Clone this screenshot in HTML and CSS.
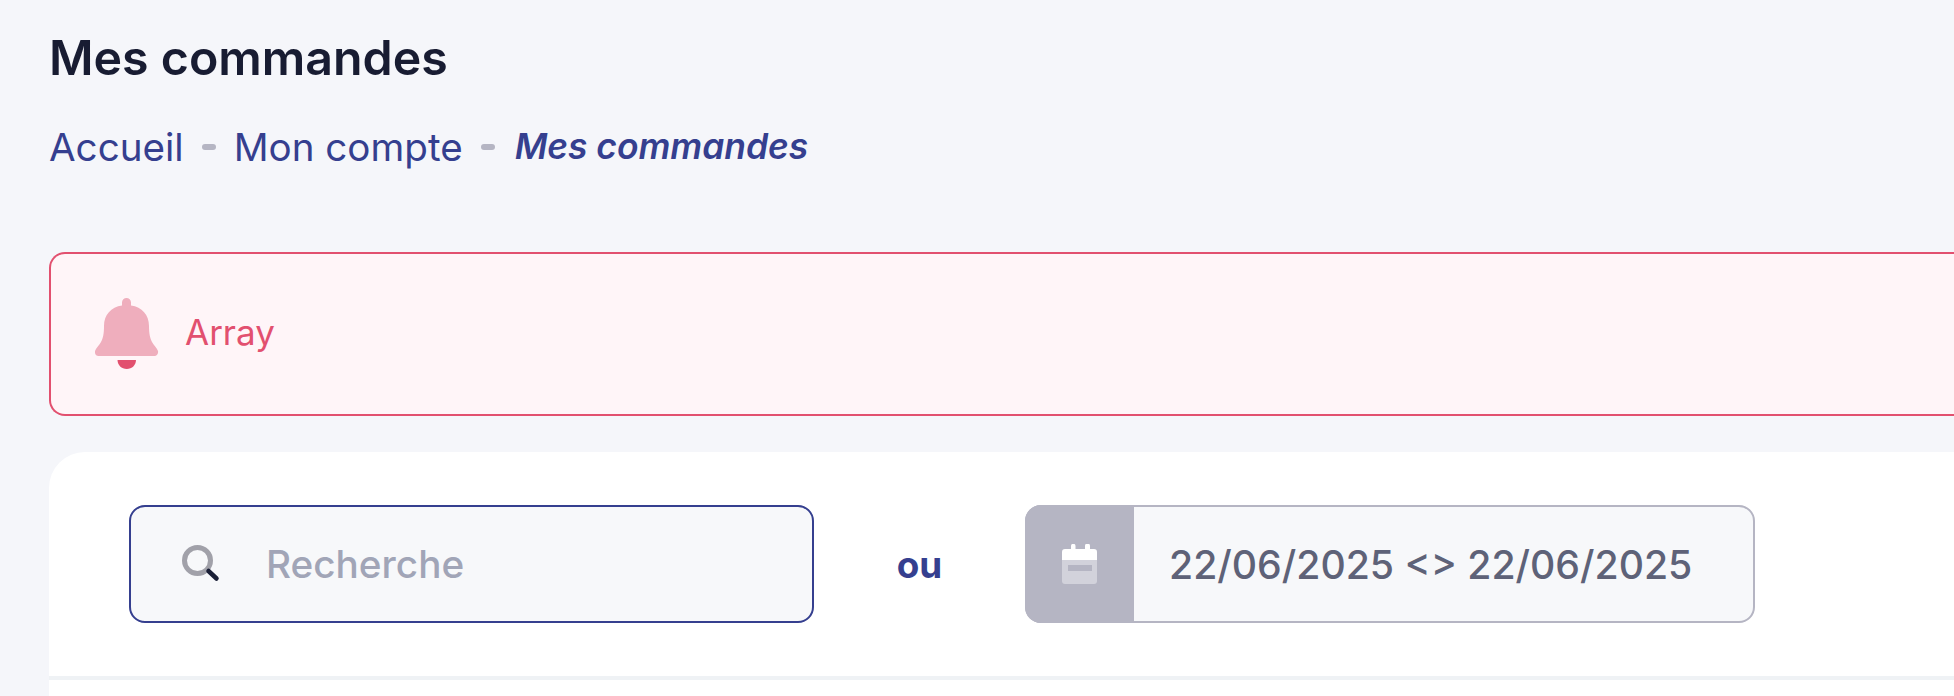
FILE: index.html
```html
<!DOCTYPE html>
<html lang="fr">
<head>
  <meta charset="UTF-8">
  <meta name="viewport" content="width=device-width, initial-scale=1.0">
  <title>Mes commandes</title>
  <link rel="stylesheet" href="styles.css">
</head>
<body>
  <div class="page">
    <h1 class="page-title">Mes commandes</h1>
    <ul class="breadcrumb">
      <li><a href="#">Accueil</a></li>
      <li class="breadcrumb-sep"></li>
      <li><a href="#">Mon compte</a></li>
      <li class="breadcrumb-sep"></li>
      <li class="breadcrumb-current">Mes commandes</li>
    </ul>

    <div class="alert">
      <svg class="alert-icon" width="64" height="72" viewBox="0 0 64 72">
        <path fill="#efaebd" d="M31.500 0a4.500 4.500 0 0 1 4.500 4.500v3C47 9 54 17 54 28c0 8 1 12 3 16 1.500 3 5 6 6 9 .5 2.500-1 5-3.500 5H3.500C1 58-.5 55.500 0 53c1-3 4.500-6 6-9 2-4 3-8 3-16C9 17 16 9 27 7.500v-3A4.500 4.500 0 0 1 31.500 0z"/>
        <path fill="#e2506f" d="M22.500 62h18.500c0 5-4 9-9.250 9s-9.250-4-9.250-9z"/>
      </svg>
      <span class="alert-text">Array</span>
    </div>

    <div class="card">
      <div class="filters">
        <label class="search">
          <svg class="search-icon" width="38" height="38" viewBox="0 0 38 38">
            <circle cx="15.500" cy="15.500" r="13" fill="none" stroke="#a1a1a9" stroke-width="5"/>
            <path d="M26.500 26l8 7.500" fill="none" stroke="#1a1f36" stroke-width="4.500" stroke-linecap="round"/>
          </svg>
          <input type="text" placeholder="Recherche">
        </label>
        <span class="filters-or">ou</span>
        <div class="daterange">
          <span class="daterange-addon">
            <svg width="36" height="40" viewBox="0 0 36 40">
              <path fill="#d2d2db" d="M0 16h35v21a3 3 0 0 1-3 3H3a3 3 0 0 1-3-3z"/>
              <path fill="#fff" d="M3 5h6V2a2.250 2.250 0 0 1 4.500 0v3H23V2a2.500 2.500 0 0 1 5 0v3h4a3 3 0 0 1 3 3v8H0V8a3 3 0 0 1 3-3z"/>
              <rect x="6" y="21" width="24" height="6" fill="#b5b5c3"/>
            </svg>
          </span>
          <span class="daterange-value">22/06/2025 &lt;&gt; 22/06/2025</span>
        </div>
      </div>
      <div class="card-divider"></div>
    </div>
  </div>
</body>
</html>
```

FILE: styles.css
```css
html, body {
  height: 100%;
}

body {
  margin: 0;
  background: #f5f6fa;
  font-family: 'Inter', 'Liberation Sans', sans-serif;
  overflow: hidden;
}

.page {
  display: flex;
  flex-direction: column;
  box-sizing: border-box;
  height: 100%;
  padding: 31px 0 0 49px;
}

.page-title {
  margin: 0;
  font-size: 48.3px;
  line-height: 54px;
  font-weight: 600;
  color: #181c32;
}

/* Breadcrumb */
.breadcrumb {
  display: flex;
  align-items: center;
  gap: 18px;
  margin: 40px 0 0;
  padding: 0;
  list-style: none;
  font-size: 38.6px;
  line-height: 44px;
}

.breadcrumb a {
  color: #353f8f;
  text-decoration: none;
}

.breadcrumb-sep {
  width: 14px;
  height: 6px;
  border-radius: 3px;
  background: #b5b5c3;
}

.breadcrumb-current {
  margin-left: 2px;
  font-size: 35.4px;
  font-style: italic;
  font-weight: 600;
  color: #353f8f;
}

/* Alert */
.alert {
  display: flex;
  align-items: center;
  gap: 26px;
  flex: none;
  height: 160px;
  margin-top: 83px;
  padding-left: 44px;
  border: 2px solid #e2506f;
  border-right: 0;
  border-radius: 16px 0 0 16px;
  background: #fff5f8;
}

.alert-icon {
  flex: none;
}

.alert-text {
  margin-top: -4px;
  font-size: 35px;
  color: #e2506f;
}

/* Card */
.card {
  flex: 1;
  margin-top: 36px;
  padding-top: 53px;
  border-radius: 36px 0 0 0;
  background: #fff;
}

.filters {
  display: flex;
  align-items: center;
  padding-left: 80px;
}

.search {
  display: flex;
  align-items: center;
  gap: 44px;
  box-sizing: border-box;
  width: 685px;
  height: 118px;
  padding-left: 51px;
  border: 2px solid #353f8f;
  border-radius: 16px;
  background: #f7f8fa;
}

.search input {
  flex: 1;
  min-width: 0;
  border: 0;
  outline: none;
  background: transparent;
  font: 500 38.7px 'Inter', 'Liberation Sans', sans-serif;
  color: #5e6278;
}

.search input::placeholder {
  color: #a1a5b7;
}

.filters-or {
  width: 211px;
  text-align: center;
  font-size: 36.8px;
  font-weight: 700;
  color: #353f8f;
}

.daterange {
  display: flex;
  box-sizing: border-box;
  width: 730px;
  height: 118px;
  border: 2px solid #b5b5c3;
  border-radius: 16px;
  background: #f7f8fa;
}

.daterange-addon {
  display: flex;
  align-items: center;
  justify-content: center;
  width: 109px;
  margin: -2px 0 -2px -2px;
  border-radius: 16px 0 0 16px;
  background: #b5b5c3;
}

.daterange-value {
  align-self: center;
  padding-left: 35px;
  font-size: 39.2px;
  font-weight: 500;
  color: #5e6278;
}

.card-divider {
  height: 4px;
  margin-top: 53px;
  background: #eff2f5;
}
```
